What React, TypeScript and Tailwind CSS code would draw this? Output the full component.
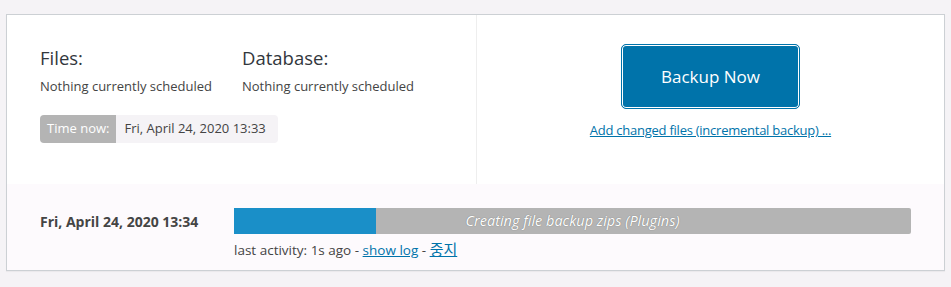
export default function App() {
  const progress = 21;

  return (
    <div className="w-[951px] h-[287px] bg-[#f5f3f6] pt-[14px] px-[6px] font-['Open_Sans',sans-serif] text-[#444]">
      <div className="w-[939px] border border-[#ccd0d4] shadow-[0_1px_1px_rgba(0,0,0,0.04)] bg-white">
        <div className="flex h-[169px]">
          <div className="w-[470px] border-r border-[#eeeeee] pl-[33px] pt-[30px]">
            <div className="flex">
              <div className="w-[202px]">
                <h2 className="text-[18.5px] leading-[26px] text-[#32373c]">Files:</h2>
                <p className="text-[13px] leading-[20px] mt-[5px]">Nothing currently scheduled</p>
              </div>
              <div>
                <h2 className="text-[18.5px] leading-[26px] text-[#32373c]">Database:</h2>
                <p className="text-[13px] leading-[20px] mt-[5px]">Nothing currently scheduled</p>
              </div>
            </div>
            <div className="mt-[19px] inline-flex h-[28px] text-[13px] rounded-[4px] overflow-hidden">
              <span className="bg-[#b4b4b4] text-white px-[7px] flex items-center">Time now:</span>
              <span className="bg-[#f5f3f6] text-[#444] pl-[8px] pr-[12px] flex items-center">Fri, April 24, 2020 13:33</span>
            </div>
          </div>
          <div className="flex-1 flex flex-col items-center pt-[29px]">
            <button className="w-[179px] h-[65px] rounded-[5px] bg-[#0073aa] border border-[#0073aa] shadow-[inset_0_0_0_1px_#fff] text-white text-[17px]">
              Backup Now
            </button>
            <a href="#" className="mt-[12px] text-[13px] tracking-[-0.25px] text-[#0073aa] underline">
              Add changed files (incremental backup) ...
            </a>
          </div>
        </div>
        <div className="bg-[#fdfafd] h-[86px] flex pl-[33px] pr-[33px] pt-[24px]">
          <div className="w-[194px] pt-[3px] text-[14px] font-bold text-[#444]">Fri, April 24, 2020 13:34</div>
          <div className="flex-1">
            <div className="relative h-[26px] bg-[#b4b4b4] rounded-r-[2px]">
              <div className="h-full bg-[#1a8fc8]" style={{ width: `${progress}%` }} />
              <div className="absolute inset-0 flex items-center justify-center text-white italic text-[14.5px] [text-shadow:0_0_1px_rgba(0,0,0,0.45)]">
                Creating file backup zips (Plugins)
              </div>
            </div>
            <div className="mt-[4px] text-[13.5px] leading-[22px]">
              last activity: 1s ago -{" "}
              <a href="#" className="text-[#0073aa] underline">show log</a> -{" "}
              <a href="#" className="text-[#0073aa] underline text-[15px] font-['Open_Sans','Noto_Sans_CJK_KR',sans-serif]">중지</a>
            </div>
          </div>
        </div>
      </div>
    </div>
  );
}
